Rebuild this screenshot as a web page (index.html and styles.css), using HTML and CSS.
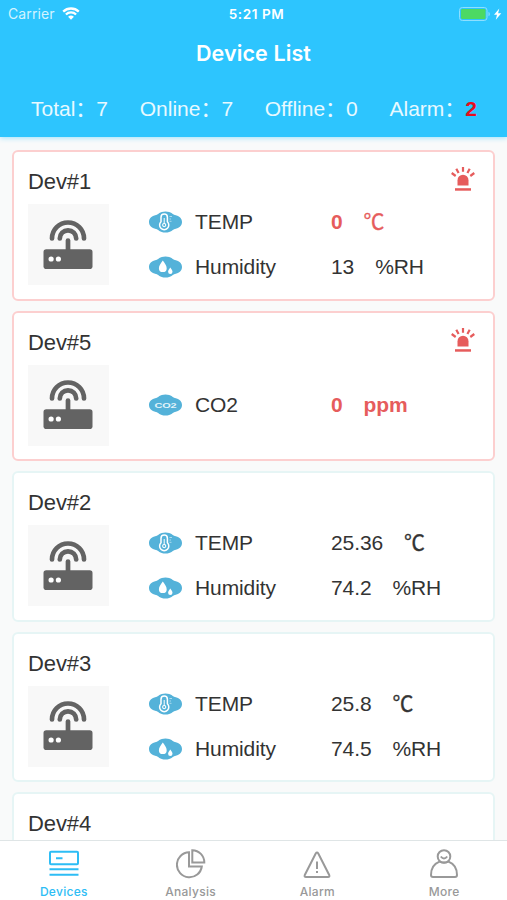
FILE: index.html
```html
<!DOCTYPE html>
<html lang="en">
<head>
  <meta charset="UTF-8">
  <title>Device List</title>
  <meta name="viewport" content="width=device-width, initial-scale=1.0">
  <link rel="stylesheet" href="styles.css">
</head>
<body>
  <!-- shared icons -->
  <svg class="defs" width="0" height="0">
    <symbol id="router" viewBox="0 0 50 50">
      <g fill="none" stroke="#636363" stroke-width="4.700" stroke-linecap="round">
        <path d="M9 18.500a16 16 0 0 1 32 0M16.800 18.500a8.200 8.200 0 0 1 16.400 0"/>
        <path d="M25 20.500v12"/>
      </g>
      <rect x="0.500" y="29.300" width="49" height="19.800" rx="2.800" fill="#636363"/>
      <circle cx="8.100" cy="39" r="2.600" fill="#fff"/>
      <circle cx="15.400" cy="39" r="2.600" fill="#fff"/>
    </symbol>
    <symbol id="cloud" viewBox="0 0 33 22">
      <path fill="#54b2d9" d="M7 4C9.500 3.500 10.500.4 16.500.4S23.500 3.500 26 4c4.500.8 7 3.500 7 7s-2.500 6.200-7 7c-2.500.5-3.500 3.600-9.500 3.600S9.500 18.500 7 18c-4.500-.8-7-3.500-7-7s2.500-6.200 7-7z"/>
    </symbol>
    <symbol id="temp" viewBox="0 0 33 22">
      <use href="#cloud"/>
      <g fill="none" stroke="#fff" stroke-width="1.500">
        <path d="M12 10.800V6.200a3.200 3.200 0 0 1 6.400 0v4.600a4.600 4.600 0 1 1-6.400 0z"/>
        <path d="M15.200 7v6" stroke-width="1"/>
        <circle cx="15.200" cy="14.100" r="1.600" stroke-width="1.100"/>
      </g>
      <path d="M20.500 5.500h2.500M20.500 8h1.500M20.500 10.300h2" stroke="#b9e0f0" stroke-width=".9"/>
    </symbol>
    <symbol id="drops" viewBox="0 0 33 22">
      <use href="#cloud"/>
      <path fill="#fff" d="M13.800 4.500c2 3 3.900 5.200 3.900 7.700a3.900 3.900 0 0 1-7.800 0c0-2.500 1.900-4.700 3.900-7.700zM21.300 11.500c1.200 1.700 2.200 2.900 2.200 4.200a2.200 2.200 0 0 1-4.400 0c0-1.300 1-2.500 2.200-4.200z"/>
    </symbol>
    <symbol id="siren" viewBox="0 0 24 24">
      <path fill="#e65c5c" d="M6.500 18.500V13.200a5.500 5.500 0 0 1 11 0v5.300z"/>
      <rect x="4" y="21.200" width="16" height="2.500" fill="#e65c5c"/>
      <path d="M12 0v4.800M5.300 1.800l2.300 4.300M18.700 1.800l-2.300 4.300M.7 6l4 3M23.300 6l-4 3" stroke="#e65c5c" stroke-width="2.200"/>
    </symbol>
  </svg>

  <header class="header">
    <div class="status-bar">
      <div class="carrier">Carrier
        <svg width="18" height="13" viewBox="0 0 18 13">
          <g fill="none" stroke="#fff" stroke-width="2.300">
            <path d="M1.200 4.600a11.300 11.300 0 0 1 15.600 0M3.900 7.500a7.300 7.300 0 0 1 10.200 0"/>
          </g>
          <path fill="#fff" d="M9 12.700 6.100 9.800a4.200 4.200 0 0 1 5.800 0z"/>
        </svg>
      </div>
      <div class="time">5:21 PM</div>
      <div class="battery">
        <svg width="43" height="14" viewBox="0 0 43 14">
          <rect x=".5" y=".5" width="27.500" height="13" rx="2.800" fill="none" stroke="#8edfff"/>
          <rect x="2" y="2" width="24.500" height="10" rx="1.200" fill="#4cd964"/>
          <path d="M29.500 4.700c1.800.8 1.800 3.800 0 4.600z" fill="#8edfff"/>
          <path d="M40.300 1.500 35 7.800h3l-1.200 5 5.500-6.600h-3.200z" fill="#fff"/>
        </svg>
      </div>
    </div>
    <h1 class="title">Device List</h1>
    <div class="summary">
      <span>Total：7</span>
      <span>Online：7</span>
      <span>Offline：0</span>
      <span>Alarm：<b>2</b></span>
    </div>
  </header>

  <main class="list">
    <section class="card alarm">
      <div class="card-head">
        <h2>Dev#1</h2>
        <svg class="siren"><use href="#siren"/></svg>
      </div>
      <div class="card-body">
        <div class="thumb"><svg><use href="#router"/></svg></div>
        <div class="readings">
          <div class="row warn"><svg><use href="#temp"/></svg><span class="name">TEMP</span><span class="value">0</span><span class="unit degree">℃</span></div>
          <div class="row"><svg><use href="#drops"/></svg><span class="name">Humidity</span><span class="value">13</span><span class="unit">%RH</span></div>
        </div>
      </div>
    </section>

    <section class="card alarm">
      <div class="card-head">
        <h2>Dev#5</h2>
        <svg class="siren"><use href="#siren"/></svg>
      </div>
      <div class="card-body">
        <div class="thumb"><svg><use href="#router"/></svg></div>
        <div class="readings">
          <div class="row warn">
            <svg viewBox="0 0 33 22"><use href="#cloud"/><text class="co2" x="5.500" y="14" textLength="22" lengthAdjust="spacingAndGlyphs">CO2</text></svg>
            <span class="name">CO2</span><span class="value">0</span><span class="unit">ppm</span>
          </div>
        </div>
      </div>
    </section>

    <section class="card">
      <div class="card-head"><h2>Dev#2</h2></div>
      <div class="card-body">
        <div class="thumb"><svg><use href="#router"/></svg></div>
        <div class="readings">
          <div class="row"><svg><use href="#temp"/></svg><span class="name">TEMP</span><span class="value">25.36</span><span class="unit degree">℃</span></div>
          <div class="row"><svg><use href="#drops"/></svg><span class="name">Humidity</span><span class="value">74.2</span><span class="unit">%RH</span></div>
        </div>
      </div>
    </section>

    <section class="card">
      <div class="card-head"><h2>Dev#3</h2></div>
      <div class="card-body">
        <div class="thumb"><svg><use href="#router"/></svg></div>
        <div class="readings">
          <div class="row"><svg><use href="#temp"/></svg><span class="name">TEMP</span><span class="value">25.8</span><span class="unit degree">℃</span></div>
          <div class="row"><svg><use href="#drops"/></svg><span class="name">Humidity</span><span class="value">74.5</span><span class="unit">%RH</span></div>
        </div>
      </div>
    </section>

    <section class="card">
      <div class="card-head"><h2>Dev#4</h2></div>
    </section>
  </main>

  <nav class="tabs">
    <a class="tab active">
      <svg viewBox="0 0 30 30"><path d="M2 2.700h26q1 0 1 1v10.600q0 1-1 1H2q-1 0-1-1V3.700q0-1 1-1zM7 9.300h6.500M.5 20.200h29M.5 25.800h29"/></svg>
      Devices
    </a>
    <a class="tab">
      <svg viewBox="0 0 30 30"><path d="M13 3.300A12.500 12.500 0 1 0 25.800 17.500H13zM16.300 1.200V13.600h12A12.200 12.200 0 0 0 16.300 1.200z"/></svg>
      Analysis
    </a>
    <a class="tab">
      <svg viewBox="0 0 30 30"><path d="M13.700 4.500q1.300-2 2.600 0L27.200 26q.8 2-1.200 2H4q-2 0-1.200-2zM15 12.500v7.500M15 22v2"/></svg>
      Alarm
    </a>
    <a class="tab">
      <svg viewBox="0 0 30 30"><circle cx="15" cy="7.500" r="6.300"/><path d="M11.800 7.500q3.200 4 6.400 0M10.500 12.600C5.500 14.500 2 19.500 2 26q0 2 2 2h22q2 0 2-2c0-6.500-3.500-11.500-8.500-13.400q-4.500 2-9 0z"/></svg>
      More
    </a>
  </nav>
</body>
</html>
```

FILE: styles.css
```css
* {
  box-sizing: border-box;
}
body {
  margin: 0;
  height: 900px;
  display: flex;
  flex-direction: column;
  overflow: hidden;
  background: #f9fafa;
  color: #333;
  font-family: "Liberation Sans", "Noto Sans CJK SC", sans-serif;
  font-size: 21px;
}
.defs {
  position: absolute;
}
svg {
  display: block;
  flex: none;
}

/* header */
.header {
  position: relative;
  flex: none;
  height: 137px;
  background: #2dc5fe;
  color: #fff;
  box-shadow: 0 1px 5px rgba(45, 197, 254, 0.45);
}
.status-bar {
  display: grid;
  grid-template-columns: 1fr auto 1fr;
  align-items: center;
  height: 27px;
  padding: 0 5px 0 8px;
  font: 14px Inter, sans-serif;
}
.carrier {
  display: flex;
  align-items: center;
  gap: 7px;
  color: #d3f3ff;
  letter-spacing: 0.1px;
}
.time {
  padding-left: 3px;
  font-size: 13.5px;
  font-weight: 600;
  letter-spacing: 0.6px;
}
.battery {
  justify-self: end;
}
.title {
  margin: 0;
  height: 50px;
  padding-top: 1px;
  line-height: 50px;
  text-align: center;
  font-family: Inter, sans-serif;
  font-size: 21.5px;
  font-weight: 600;
  letter-spacing: 0.1px;
}
.summary {
  display: flex;
  justify-content: space-between;
  padding: 16px 30px 0 31px;
  line-height: 32px;
  color: #e8f9ff;
}
.summary b {
  color: #e60d1c;
}

/* device cards */
.list {
  flex: 1;
  min-height: 0;
  overflow: hidden;
  display: flex;
  flex-direction: column;
  gap: 10px;
  padding: 13px 12px 0;
}
.card {
  flex: none;
  height: 150.5px;
  padding: 15px 18px 0 14px;
  border: 2px solid #e6f5f5;
  border-radius: 6px;
  background: #fff;
}
.card.alarm {
  border-color: #fccfcf;
}
.card-head {
  display: flex;
  justify-content: space-between;
  height: 37px;
}
.card h2 {
  margin: 0;
  font-size: 22px;
  font-weight: normal;
  line-height: 29px;
  letter-spacing: -0.1px;
}
.siren {
  width: 24px;
  height: 24px;
}
.card-body {
  display: flex;
  gap: 40px;
}
.thumb {
  display: grid;
  place-items: center;
  width: 81px;
  height: 81px;
  padding-right: 1px;
  background: #f8f8f8;
}
.thumb svg {
  width: 50px;
  height: 50px;
}
.readings {
  flex: 1;
  display: flex;
  flex-direction: column;
  justify-content: center;
  gap: 15px;
}
.row {
  display: flex;
  align-items: center;
  height: 30px;
  line-height: 30px;
  letter-spacing: -0.1px;
}
.row svg {
  width: 33px;
  height: 22px;
}
.name {
  width: 136px;
  margin-left: 13px;
}
.value {
  margin-right: 21px;
}
.warn .value,
.warn .unit {
  color: #e65c5c;
  font-weight: bold;
}
.warn .degree {
  font-weight: normal;
}
.degree {
  -webkit-text-stroke: 0.3px currentColor;
}
.co2 {
  font: bold 8px "Liberation Sans", sans-serif;
  fill: #e3f4fa;
}

/* bottom tabs */
.tabs {
  flex: none;
  display: grid;
  grid-template-columns: repeat(4, 1fr);
  height: 60px;
  border-top: 1px solid #dfe5e6;
  background: #fff;
}
.tab {
  display: flex;
  flex-direction: column;
  align-items: center;
  gap: 5px;
  padding: 8px 0 0 1px;
  color: #999;
  font: 500 12px/16px Inter, sans-serif;
  letter-spacing: 0.3px;
}
.tab svg {
  width: 30px;
  height: 30px;
  fill: none;
  stroke: currentColor;
  stroke-width: 2;
}
.tab.active {
  color: #2dbdf5;
}
```
